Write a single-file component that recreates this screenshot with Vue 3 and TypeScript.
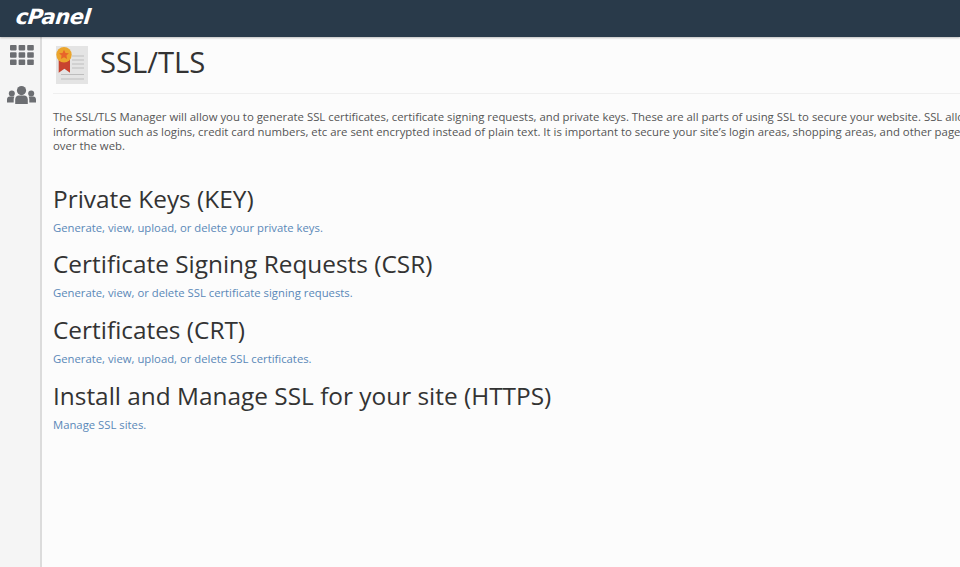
<script setup lang="ts">
const sections = [
  { title: 'Private Keys (KEY)', link: 'Generate, view, upload, or delete your private keys.' },
  { title: 'Certificate Signing Requests (CSR)', link: 'Generate, view, or delete SSL certificate signing requests.' },
  { title: 'Certificates (CRT)', link: 'Generate, view, upload, or delete SSL certificates.' },
  { title: 'Install and Manage SSL for your site (HTTPS)', link: 'Manage SSL sites.' },
]
</script>

<template>
  <div class="page">
    <header class="topbar"><span class="logo">cPanel</span></header>
    <div class="body">
      <nav class="side">
        <svg class="ico-grid" width="24" height="20" viewBox="0 0 24 20" fill="#6c6e72">
          <rect x="0" y="0" width="6.6" height="5.4" rx=".8" /><rect x="8.6" y="0" width="6.6" height="5.4" rx=".8" /><rect x="17.2" y="0" width="6.6" height="5.4" rx=".8" />
          <rect x="0" y="7.3" width="6.6" height="5.4" rx=".8" /><rect x="8.6" y="7.3" width="6.6" height="5.4" rx=".8" /><rect x="17.2" y="7.3" width="6.6" height="5.4" rx=".8" />
          <rect x="0" y="14.6" width="6.6" height="5.4" rx=".8" /><rect x="8.6" y="14.6" width="6.6" height="5.4" rx=".8" /><rect x="17.2" y="14.6" width="6.6" height="5.4" rx=".8" />
        </svg>
        <svg class="ico-users" width="29" height="18" viewBox="0 0 29 18" fill="#6c6e72">
          <circle cx="14.5" cy="4.6" r="4.6" />
          <path d="M8.2 18v-4.5c0-2.6 1.8-3.9 3.6-3.9h5.4c1.8 0 3.6 1.3 3.6 3.9V18z" />
          <circle cx="4.8" cy="7.4" r="3" /><circle cx="24.2" cy="7.4" r="3" />
          <path d="M0 16.4v-3c0-1.9 1.3-2.9 2.6-2.9h3.6c.6 0 .9.1 1.1.3-.4.8-.6 1.7-.6 2.7v2.9zM29 16.4v-3c0-1.9-1.3-2.9-2.6-2.9h-3.6c-.6 0-.9.1-1.1.3.4.8.6 1.7.6 2.7v2.9z" />
        </svg>
      </nav>
      <main class="main">
        <div class="head">
          <svg class="cert" width="32" height="38" viewBox="0 0 32 38">
            <rect width="32" height="38" fill="#e4e4e4" />
            <g stroke="#bdbdbd" stroke-width="1.2">
              <path d="M16 10h12M16 14h12M16 18h12M16 22h12M5 28.500h23M5 33h23" />
            </g>
            <path d="M2.700 10h11.300v16.700l-5.600-4-5.700 4z" fill="#c8432f" />
            <circle cx="8" cy="8.700" r="7.700" fill="#eba52d" />
            <path d="M8 3.800l1.500 3.100 3.400.4-2.500 2.300.7 3.400L8 11.300l-3.100 1.700.7-3.400L3.100 7.300l3.400-.4z" fill="#e8642a" />
          </svg>
          <h1>SSL/TLS</h1>
        </div>
        <p class="intro">The SSL/TLS Manager will allow you to generate SSL certificates, certificate signing requests, and private keys. These are all parts of using SSL to secure your website. SSL allows websites to make sure that<br />information such as logins, credit card numbers, etc are sent encrypted instead of plain text. It is important to secure your site’s login areas, shopping areas, and other pages where sensitive information could be sent<br />over the web.</p>
        <section v-for="s in sections" :key="s.title" class="sec">
          <h2>{{ s.title }}</h2>
          <a class="link">{{ s.link }}</a>
        </section>
      </main>
    </div>
  </div>
</template>

<style>
html, body { margin: 0; overflow: hidden; }
</style>

<style scoped>
.page {
  width: 960px;
  height: 567px;
  overflow: hidden;
  display: flex;
  flex-direction: column;
  background: #fcfcfc;
  font-family: "Open Sans", "Liberation Sans", sans-serif;
}
.topbar {
  height: 37px;
  flex: none;
  box-sizing: border-box;
  padding-left: 16px;
  background: #293a4a;
  display: flex;
  align-items: center;
  box-shadow: 0 1px 2px rgba(0, 0, 0, .25);
  position: relative;
}
.logo {
  display: inline-block;
  color: #fff;
  font-family: "DejaVu Sans", sans-serif;
  font-size: 21px;
  font-weight: 700;
  font-style: italic;
  letter-spacing: -.4px;
  line-height: 30px;
  transform: skewX(-6deg);
  margin-top: -4px;
}
.body { flex: 1; display: flex; min-height: 0; }
.side {
  flex: none;
  background: #f5f5f5;
  border-right: 2px solid #dcdcdc;
  display: flex;
  flex-direction: column;
  align-items: center;
  padding-top: 8px;
  padding-left: 3px;
  box-sizing: border-box;
  width: 42px;
}
.ico-users { margin-top: 21px; }
.main { width: 1100px; flex: none; padding-left: 11px; box-sizing: border-box; }
.head {
  width: 920px;
  display: flex;
  align-items: center;
  gap: 12px;
  height: 57px;
  padding-left: 3px;
  box-sizing: border-box;
  border-bottom: 1px solid #efefef;
}
.cert { margin-bottom: 1px; }
h1 {
  margin: 0 0 6px;
  font-size: 29.200px;
  font-weight: 400;
  color: #333;
  line-height: 40px;
}
.intro {
  margin: 16px 0 0;
  font-size: 11.360px;
  line-height: 14.500px;
  color: #555;
  white-space: nowrap;
}
.sec { display: flex; flex-direction: column; align-items: flex-start; }
.sec:first-of-type { margin-top: 29px; }
h2 {
  margin: 0;
  font-size: 24.400px;
  font-weight: 400;
  line-height: 32px;
  color: #333;
}
.link {
  margin-top: 5px;
  margin-bottom: 13.700px;
  font-size: 11.300px;
  line-height: 15px;
  color: #5a88b8;
}
</style>
